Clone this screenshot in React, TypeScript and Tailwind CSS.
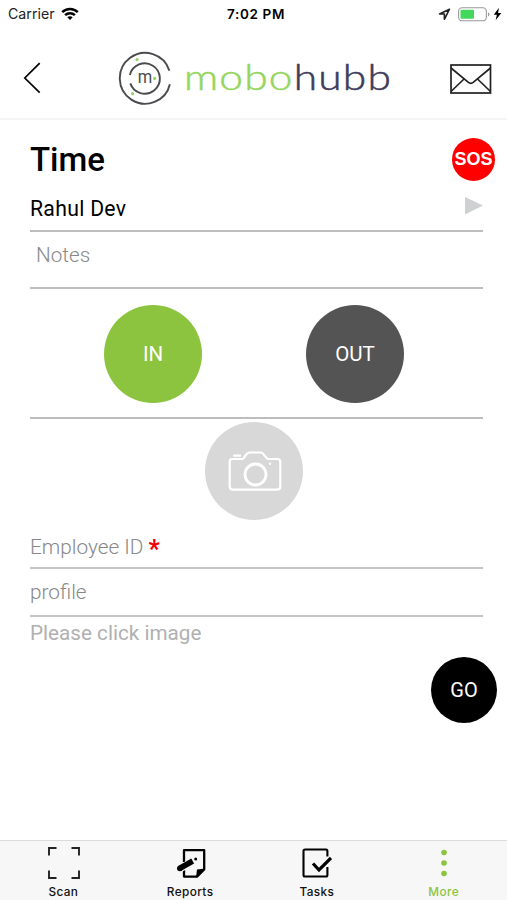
import type {ReactNode} from "react";

function StatusBar() {
    return (
        <div className="relative flex h-7 items-center justify-between pl-2 pr-[5px] font-['Inter',sans-serif] text-[13px] leading-none text-[#222]">
            <div className="flex items-center gap-[6px]">
                <span className="text-[14.2px]">Carrier</span>
                <svg width="18" height="14" viewBox="0 0 18 14" fill="none" stroke="#000" strokeWidth="2.5">
                    <path d="M1.2 5.2C5.5 .9 12.5 .9 16.8 5.2"/>
                    <path d="M4.1 8.1C6.8 5.5 11.2 5.5 13.9 8.1"/>
                    <path d="M9 13L6.3 10.2C7.8 8.8 10.2 8.8 11.7 10.2Z" fill="#000" stroke="none"/>
                </svg>
            </div>
            <span className="absolute left-[227px] mt-px whitespace-nowrap text-[13.5px] font-semibold tracking-[0.65px] text-black">7:02 PM</span>
            <div className="flex items-center">
                <svg width="13" height="13" viewBox="0 0 13 13" fill="none" stroke="#222" strokeWidth="1.6" strokeLinejoin="round">
                    <path d="M11.5 1.2L1.5 6H6.4V11.3Z"/>
                </svg>
                <svg className="ml-[7px]" width="33" height="15" viewBox="0 0 33 15">
                    <rect x=".6" y=".8" width="27.8" height="13" rx="3.6" fill="none" stroke="#999" strokeWidth="1.1"/>
                    <rect x="2.5" y="2.8" width="13.5" height="9" rx="1" fill="#42d85b"/>
                    <path d="M30 5.2C32 6 32 8.6 30 9.4Z" fill="#999"/>
                </svg>
                <svg className="ml-[2px]" width="9" height="14" viewBox="0 0 8 13" fill="#000">
                    <path d="M5.4 .7L.5 7.2H3.4L2.3 12.3L7.5 5.6H4.5Z"/>
                </svg>
            </div>
        </div>
    );
}

function Logo() {
    return (
        <svg width="276" height="56" viewBox="0 0 276 56">
            <g fill="none" stroke="#4b4a4e" strokeWidth="1.9">
                <path d="M51.4 20.6A25.4 25.4 0 1 0 51.9 34.2"/>
                <path d="M11.9 25A15.2 15.2 0 1 1 12.3 33.4"/>
            </g>
            <g fill="#96d463">
                <circle cx="19" cy="9.5" r="1.6"/>
                <circle cx="36.6" cy="28.4" r="1.6"/>
                <circle cx="14.6" cy="43.7" r="1.6"/>
            </g>
            <text x="19.7" y="32.6" textLength="14.5" lengthAdjust="spacingAndGlyphs" className="font-['Roboto',sans-serif] text-[18px]" fill="#4b4a4e">m</text>
            <text x="66" y="40.2" textLength="208" lengthAdjust="spacingAndGlyphs" className="font-['Lato',sans-serif] text-[35.5px] font-light tracking-[1px]" strokeWidth=".5">
                <tspan fill="#94d65e" stroke="#94d65e">mobo</tspan>
                <tspan fill="#403c5b" stroke="#403c5b">hubb</tspan>
            </text>
        </svg>
    );
}

function Header() {
    return (
        <header className="flex h-[92px] items-center justify-between border-b-2 border-[#f5f5f5] pl-[23px] pr-[15px]">
            <svg className="mt-[9px]" width="18" height="32" viewBox="0 0 18 32" fill="none" stroke="#000" strokeWidth="1.7">
                <path d="M16.7 1.2L1.8 16L16.7 30.6"/>
            </svg>
            <div className="mt-[9px] ml-[21px]"><Logo/></div>
            <svg className="mt-[11px]" width="42" height="30" viewBox="0 0 42 30" fill="none" stroke="#222" strokeWidth="1.7">
                <rect x="1" y="1" width="39.5" height="28"/>
                <path d="M1 4L18.4 18.4Q20.8 20.2 23.2 18.4L40.5 4M1 27.5L14 15M40.5 27.5L27.5 15"/>
            </svg>
        </header>
    );
}

function Round({className, children}: { className: string, children: ReactNode }) {
    return (
        <button className={`flex shrink-0 items-center justify-center rounded-full ${className}`}>{children}</button>
    );
}

function Tab({label, active, children}: { label: string, active?: boolean, children: ReactNode }) {
    return (
        <div className={`flex flex-col items-center pt-[6px] ${active ? "text-[#8bc53f]" : "text-[#111]"}`}>
            <div className="flex h-8 items-center">{children}</div>
            <span className="mt-[6px] font-['Inter',sans-serif] text-[11.8px] leading-[14px] font-medium tracking-[0.4px]">{label}</span>
        </div>
    );
}

export default function App() {
    return (
        <div className="flex h-[900px] w-[507px] flex-col overflow-hidden bg-white font-['Roboto',sans-serif] text-black">
            <StatusBar/>
            <Header/>
            <main className="flex flex-1 flex-col pl-[30px]">
                <div className="flex h-[78px] items-center justify-between pr-3">
                    <h1 className="text-[33px] leading-none font-medium">Time</h1>
                    <Round className="size-[43px] bg-[#fe0000] font-['Liberation_Sans',sans-serif] text-[18px] font-bold text-white">SOS</Round>
                </div>
                <div className="mr-6 flex h-[34px] items-start justify-between border-b-2 border-[#bdbdbd]">
                    <span className="text-[21.2px] leading-[22px] tracking-[0.3px]">Rahul Dev</span>
                    <svg className="-mt-px" width="18" height="18" viewBox="0 0 18 18" fill="#cdd1d1">
                        <path d="M0 0L18 8.6L0 17.5Z"/>
                    </svg>
                </div>
                <div className="mr-6 h-[57px] border-b-2 border-[#bdbdbd] pt-[11px] pl-[6px] text-[20.7px] leading-6 font-light text-[#888]">Notes</div>
                <div className="mr-6 flex h-[130px] gap-[104px] border-b-2 border-[#bdbdbd] pt-[16px] pl-[74px] text-[20.5px] text-white">
                    <Round className="size-[98px] bg-[#8cc440] pt-px">IN</Round>
                    <Round className="size-[98px] bg-[#545454] pt-px">OUT</Round>
                </div>
                <div className="mr-6 flex h-[101px] items-end pl-[175px]">
                    <Round className="size-[98px] bg-[#d8d8d8]">
                        <svg className="ml-[2px]" width="54" height="42" viewBox="0 0 54 42" fill="none" stroke="#fff" strokeWidth="2.2" strokeLinejoin="round">
                            <path d="M4 9H14.5C17 8 17.5 3 21 2.5H33C36.5 3 37 8 40 9H49.5Q52.3 9 52.3 12V36.5Q52.3 39.7 49 39.7H5Q1.7 39.7 1.7 36.5V12Q1.7 9 4 9Z"/>
                            <circle cx="27.5" cy="24.5" r="10.5" strokeWidth="2.8"/>
                            <path d="M6 5.7H12" strokeLinecap="round"/>
                            <circle cx="42" cy="13.7" r="1.2" fill="#fff" stroke="none"/>
                        </svg>
                    </Round>
                </div>
                <div className="mr-6 flex h-[49px] items-start gap-[5px] border-b-2 border-[#c6c6c6] pt-[15px] text-[20.8px] leading-6 font-light text-[#888]">
                    <span>Employee ID</span>
                    <span className="text-[25px] leading-[29px] font-bold text-[#f20000]">*</span>
                </div>
                <div className="mr-6 h-12 border-b-2 border-[#c6c6c6] pt-[11px] text-[20.8px] leading-6 font-light text-[#888]">profile</div>
                <div className="h-10 pt-1 text-[20.7px] leading-6 text-[#b0b0b0]">Please click image</div>
                <Round className="mr-2.5 size-[66px] self-end bg-black text-[20px] text-white">GO</Round>
            </main>
            <nav className="grid h-[60px] grid-cols-4 border-t border-[#dcdcdc] bg-[#f7f7f7]">
                <Tab label="Scan">
                    <svg className="ml-px" width="32" height="32" viewBox="0 0 32 32" fill="none" stroke="#222" strokeWidth="1.9">
                        <path d="M1 8.5V1H8.5M23.5 1H31V8.5M31 23.5V31H23.5M8.5 31H1V23.5"/>
                    </svg>
                </Tab>
                <Tab label="Reports">
                    <svg className="ml-[2px]" width="30" height="30" viewBox="0 0 30 30">
                        <path d="M8 14V2.2H28.2V21.5L21 28.6H8V21" fill="none" stroke="#000" strokeWidth="2.3" strokeLinejoin="round"/>
                        <path d="M20 29.6L21 21.5L29 20.5Z"/>
                        <path d="M4.2 20.6L16.7 13.4" fill="none" stroke="#f7f7f7" strokeWidth="7.5"/>
                        <path d="M3.5 20.5L16.7 13" fill="none" stroke="#000" strokeWidth="5.8"/>
                        <circle cx="3.8" cy="20.5" r="2.8"/>
                        <circle cx="19.7" cy="11" r="1.5"/>
                    </svg>
                </Tab>
                <Tab label="Tasks">
                    <svg width="30" height="30" viewBox="0 0 30 30" fill="none" stroke="#000" strokeWidth="2.1">
                        <path d="M25.4 8.5V3Q25.4 1.5 24 1.5H3Q1.5 1.5 1.5 3V27Q1.5 28.5 3 28.5H24Q25.4 28.5 25.4 27V19"/>
                        <path d="M11 15.5L17 22L29 10" strokeWidth="3.2"/>
                    </svg>
                </Tab>
                <Tab label="More" active>
                    <svg width="8" height="28" viewBox="0 0 8 28" fill="#8bc53f">
                        <circle cx="4" cy="3.5" r="2.8"/>
                        <circle cx="4" cy="14" r="2.8"/>
                        <circle cx="4" cy="24.5" r="2.8"/>
                    </svg>
                </Tab>
            </nav>
        </div>
    );
}
